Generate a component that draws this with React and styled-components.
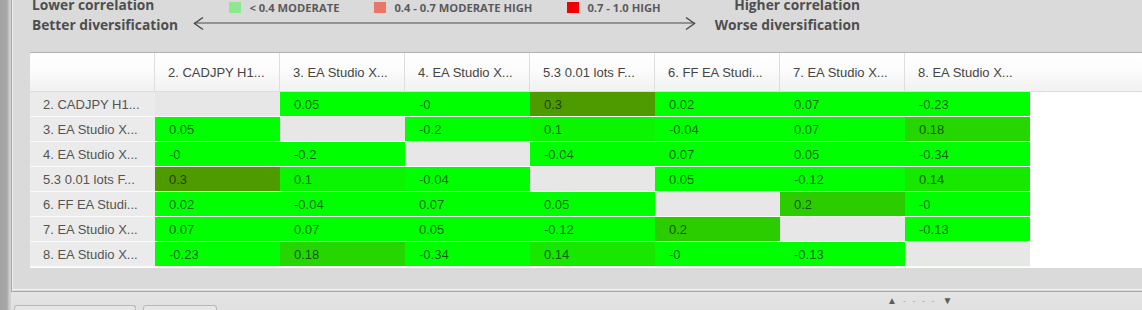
import React from "react";
import styled, { createGlobalStyle } from "styled-components";

const GlobalStyle = createGlobalStyle`
  html, body {
    margin: 0;
    padding: 0;
    width: 1142px;
    height: 310px;
    overflow: hidden;
    background: #dcdcdc;
  }
  * {
    box-sizing: border-box;
  }
`;

const labels = [
  "2. CADJPY H1...",
  "3. EA Studio X...",
  "4. EA Studio X...",
  "5.3 0.01 lots F...",
  "6. FF EA Studi...",
  "7. EA Studio X...",
  "8. EA Studio X...",
];

const matrix = [
  [null, "0.05", "-0", "0.3", "0.02", "0.07", "-0.23"],
  ["0.05", null, "-0.2", "0.1", "-0.04", "0.07", "0.18"],
  ["-0", "-0.2", null, "-0.04", "0.07", "0.05", "-0.34"],
  ["0.3", "0.1", "-0.04", null, "0.05", "-0.12", "0.14"],
  ["0.02", "-0.04", "0.07", "0.05", null, "0.2", "-0"],
  ["0.07", "0.07", "0.05", "-0.12", "0.2", null, "-0.13"],
  ["-0.23", "0.18", "-0.34", "0.14", "-0", "-0.13", null],
];

// darker green the closer a positive value gets to the moderate band
const cellColor = (value) => {
  const v = parseFloat(value);
  const t = Math.min(1, Math.max(0, (v - 0.07) / 0.23));
  const r = Math.round(78 * t);
  const g = Math.round(255 - 100 * Math.pow(t, 1.2));
  return `rgb(${r}, ${g}, 0)`;
};

const Root = styled.div`
  display: flex;
  width: 1142px;
  height: 310px;
  font-family: "Liberation Sans", Arial, sans-serif;
`;

const SideStrip = styled.div`
  width: 11px;
  flex-shrink: 0;
  background: linear-gradient(to right, #a2a2a2 0, #a8a8a8 7px, #c9c9c9 9px, #d4d4d4 11px);
`;

const Main = styled.div`
  flex: 1;
  display: flex;
  flex-direction: column;
  min-width: 0;
`;

const Panel = styled.div`
  height: 292px;
  flex-shrink: 0;
  display: flex;
  flex-direction: column;
  border-left: 1px solid #a9a9a9;
  box-shadow: inset 1px 0 0 #eeeeee;
  border-bottom: 1px solid #a8a8a8;
  background: #dadada;
  position: relative;

  &::after {
    content: "";
    position: absolute;
    left: 0;
    right: 0;
    bottom: 1px;
    height: 1px;
    background: #f2f2f2;
  }
`;

const Header = styled.div`
  height: 52px;
  flex-shrink: 0;
`;

const HeaderGrid = styled.div`
  display: grid;
  grid-template-columns: 161px 504px 163px;
  margin-top: -5px;
  padding-left: 20px;
`;

const SideLabel = styled.div`
  font-family: "Open Sans", "Liberation Sans", sans-serif;
  font-weight: 700;
  font-size: 13.75px;
  line-height: 20px;
  color: #4e4e4e;
  white-space: nowrap;
  text-align: ${(p) => (p.$right ? "right" : "left")};
`;

const Middle = styled.div`
  display: flex;
  flex-direction: column;
`;

const LegendRow = styled.div`
  height: 20px;
  padding-top: 5px;
  display: flex;
  align-items: center;
  justify-content: center;
  gap: 35px;
`;

const LegendItem = styled.div`
  display: flex;
  align-items: center;
  gap: 8px;
`;

const Swatch = styled.span`
  width: 12px;
  height: 11px;
  background: ${(p) => p.$color};
`;

const LegendText = styled.span`
  font-family: "Open Sans", "Liberation Sans", sans-serif;
  font-weight: 700;
  font-size: 11.2px;
  color: #5a5a5a;
  white-space: nowrap;
`;

const ArrowRow = styled.div`
  height: 20px;
  padding-top: 2px;
`;

const TableWrap = styled.div`
  margin-left: 18px;
  display: grid;
  grid-template-columns: repeat(8, 125px) 1fr;
  background: #ffffff;
  border-top: 1px solid #b2b2b2;
  padding-bottom: 1px;
`;

const HeadCell = styled.div`
  height: 39px;
  display: flex;
  align-items: center;
  padding-left: 13px;
  font-size: 13px;
  color: #454545;
  white-space: nowrap;
  background: linear-gradient(to bottom, #ffffff 0%, #fbfbfb 50%, #f1f1f1 100%);
  border-right: ${(p) => (p.$last ? "none" : "1px solid #dedede")};
  border-bottom: 1px solid #dddddd;
`;

const RowHead = styled.div`
  height: 25px;
  display: flex;
  align-items: center;
  padding-left: 13px;
  font-size: 13px;
  color: #545454;
  white-space: nowrap;
  background: #ebebeb;
  border-bottom: 1px solid #fafafa;
`;

const Cell = styled.div`
  height: 25px;
  display: flex;
  align-items: center;
  padding-left: 14px;
  font-size: 13px;
  color: rgba(0, 0, 0, 0.62);
  background: ${(p) => p.$bg};
  border-bottom: 1px solid #f4fff4;
`;

const Filler = styled.div`
  background: #ffffff;
`;

const Footer = styled.div`
  flex: 1;
  display: flex;
  align-items: flex-start;
  background: linear-gradient(to bottom, #e4e4e4, #dedede);
`;

const Tabs = styled.div`
  display: flex;
  gap: 7px;
  margin-top: 13px;
  margin-left: 3px;
`;

const Tab = styled.div`
  width: ${(p) => p.$w}px;
  height: 10px;
  border: 1px solid #b9b9b9;
  border-bottom: none;
  border-radius: 3px 3px 0 0;
  background: #e6e6e6;
`;

const Pager = styled.div`
  margin-left: 670px;
  margin-top: 3px;
  display: flex;
  align-items: center;
  gap: 6px;
  font-size: 10px;
  color: #5c5c5c;
`;

const Dashes = styled.span`
  color: #a8a8a8;
  font-size: 9px;
  letter-spacing: 2px;
`;

const Arrow = () => (
  <svg width="504" height="14" viewBox="0 0 504 14">
    <line x1="1" y1="6" x2="502" y2="6" stroke="#4a4a4a" strokeWidth="1.2" />
    <polyline points="10,0.5 1.5,6.5 10,12.5" fill="none" stroke="#4a4a4a" strokeWidth="1.4" />
    <polyline points="493,0.5 501.5,6.5 493,12.5" fill="none" stroke="#4a4a4a" strokeWidth="1.4" />
  </svg>
);

export default function App() {
  return (
    <Root>
      <GlobalStyle />
      <SideStrip />
      <Main>
        <Panel>
          <Header>
            <HeaderGrid>
              <div>
                <SideLabel>Lower correlation</SideLabel>
                <SideLabel>Better diversification</SideLabel>
              </div>
              <Middle>
                <LegendRow>
                  <LegendItem>
                    <Swatch $color="#8ee98e" />
                    <LegendText>&lt; 0.4 MODERATE</LegendText>
                  </LegendItem>
                  <LegendItem>
                    <Swatch $color="#e8776a" />
                    <LegendText>0.4 - 0.7 MODERATE HIGH</LegendText>
                  </LegendItem>
                  <LegendItem>
                    <Swatch $color="#f00000" />
                    <LegendText>0.7 - 1.0 HIGH</LegendText>
                  </LegendItem>
                </LegendRow>
                <ArrowRow>
                  <Arrow />
                </ArrowRow>
              </Middle>
              <div>
                <SideLabel $right>Higher correlation</SideLabel>
                <SideLabel $right>Worse diversification</SideLabel>
              </div>
            </HeaderGrid>
          </Header>

          <TableWrap>
            <HeadCell />
            {labels.map((label, i) => (
              <HeadCell key={label + i} $last={i === labels.length - 1}>
                {label}
              </HeadCell>
            ))}
            <HeadCell $last />

            {matrix.map((row, r) => (
              <React.Fragment key={r}>
                <RowHead>{labels[r]}</RowHead>
                {row.map((value, c) =>
                  value === null ? (
                    <Cell key={c} $bg="#e7e7e7" />
                  ) : (
                    <Cell key={c} $bg={cellColor(value)}>
                      {value}
                    </Cell>
                  )
                )}
                <Filler />
              </React.Fragment>
            ))}
          </TableWrap>
        </Panel>

        <Footer>
          <Tabs>
            <Tab $w={122} />
            <Tab $w={74} />
          </Tabs>
          <Pager>
            <span>▲</span>
            <Dashes>- - - -</Dashes>
            <span>▼</span>
          </Pager>
        </Footer>
      </Main>
    </Root>
  );
}
